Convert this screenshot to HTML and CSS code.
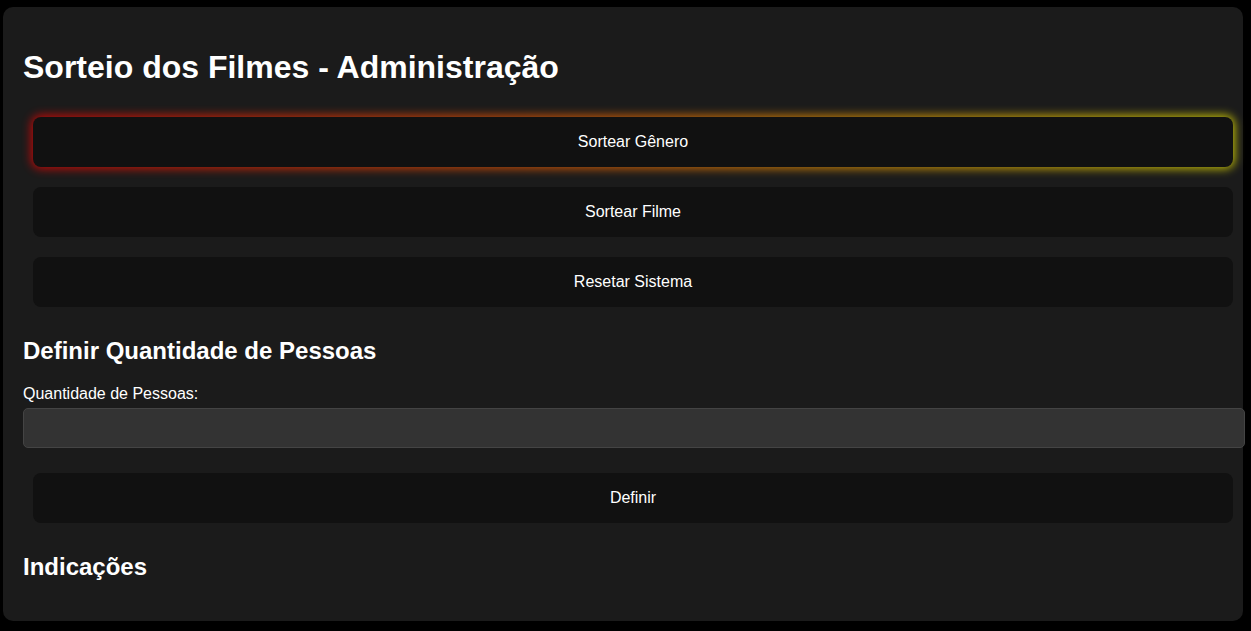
FILE: index.html
```html
<!DOCTYPE html>
<html lang="pt-BR">
<head>
<meta charset="utf-8">
<title>Sorteio dos Filmes - Administração</title>
<link rel="stylesheet" href="styles.css">
</head>
<body>
<div class="card">
  <h1 class="title">Sorteio dos Filmes - Administração</h1>
  <div class="actions">
    <button class="btn btn-glow">Sortear Gênero</button>
    <button class="btn">Sortear Filme</button>
    <button class="btn">Resetar Sistema</button>
  </div>
  <h2 class="section">Definir Quantidade de Pessoas</h2>
  <form class="form">
    <label class="label" for="qtd">Quantidade de Pessoas:</label>
    <input class="input" id="qtd" type="number">
    <div class="actions">
      <button class="btn" type="button">Definir</button>
    </div>
  </form>
  <h2 class="section">Indicações</h2>
</div>
</body>
</html>
```

FILE: styles.css
```css
html, body {
  margin: 0;
  padding: 0;
  background: #000;
  height: 100%;
  overflow: hidden;
}
body {
  font-family: "Liberation Sans", Arial, sans-serif;
  color: #fff;
}
.card {
  margin: 7px 0 0 3px;
  width: 1200px;
  padding: 20px;
  background: #1b1b1b;
  border-radius: 10px;
  display: flow-root;
}
.title {
  font-size: 32px;
  font-weight: bold;
  margin: 21px 0 21px 0;
  line-height: 38px;
}
.actions {
  display: flex;
  flex-direction: column;
}
.btn {
  display: block;
  box-sizing: border-box;
  width: 100%;
  height: 50px;
  margin: 10px;
  padding: 0;
  border: none;
  border-radius: 8px;
  background: #111;
  color: #fff;
  font-family: "Liberation Sans", Arial, sans-serif;
  font-size: 16px;
}
.btn-glow {
  position: relative;
  z-index: 0;
  background: transparent;
}
.btn-glow::before {
  content: "";
  position: absolute;
  inset: -2px;
  border-radius: 10px;
  background: linear-gradient(90deg, #ff0000, #ff7300, #fffb00);
  filter: blur(5px);
  opacity: 0.7;
  z-index: -2;
}
.btn-glow::after {
  content: "";
  position: absolute;
  inset: 0;
  border-radius: 8px;
  background: #111;
  z-index: -1;
}
.section {
  font-size: 24px;
  font-weight: bold;
  margin: 20px 0;
  line-height: 28px;
}
.form {
  margin: 0;
}
.label {
  display: block;
  font-size: 16px;
  line-height: 18px;
  margin-bottom: 5px;
}
.input {
  display: block;
  box-sizing: content-box;
  width: 100%;
  height: 18px;
  padding: 10px;
  margin: 0 0 15px 0;
  border: 1px solid #444;
  border-radius: 5px;
  background: #333;
  color: #fff;
  font-size: 16px;
  font-family: "Liberation Sans", Arial, sans-serif;
}
```
